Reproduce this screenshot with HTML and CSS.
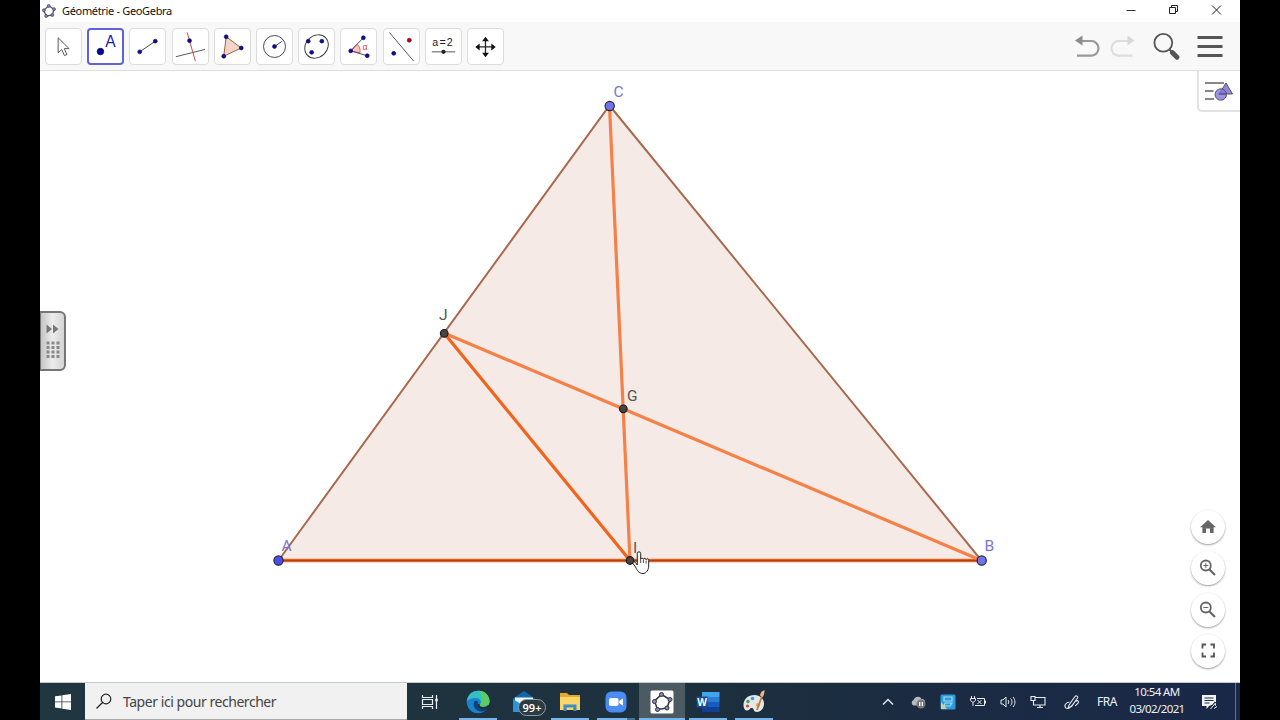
FILE: index.html
```html
<!DOCTYPE html>
<html lang="fr">
<head>
    <meta charset="UTF-8">
    <meta name="viewport" content="width=device-width, initial-scale=1.0">
    <link rel="stylesheet" href="styles.css">
    <title>Géométrie - GeoGebra</title>
</head>
<body>
<div class="screen">

    <!-- Barre de titre -->
    <header class="titlebar">
        <svg class="app-icon" width="14" height="14" viewBox="0 0 14 14">
            <path d="M6.700 1.800 12 5.200 10.300 11 4.200 12.200 1.800 6.300z" fill="none" stroke="#556" stroke-width="1.300"/>
            <g fill="#8684b8" stroke="#446" stroke-width=".7"><circle cx="6.700" cy="1.900" r="1.500"/><circle cx="12" cy="5.200" r="1.500"/><circle cx="10.300" cy="11" r="1.500"/><circle cx="4.200" cy="12" r="1.500"/><circle cx="1.900" cy="6.300" r="1.500"/></g>
        </svg>
        <span class="title">Géométrie - GeoGebra</span>
        <div class="win-buttons">
            <svg width="43" height="22" viewBox="0 0 43 22"><path d="M17.500 10.500h9" stroke="#333"/></svg>
            <svg width="43" height="22" viewBox="0 0 43 22" fill="none" stroke="#222"><path d="M17.500 7.500h6v6h-6zM19.500 7.500v-2h6v6h-2"/></svg>
            <svg width="43" height="22" viewBox="0 0 43 22"><path d="M17 5.500l9 9M26 5.500l-9 9" stroke="#222"/></svg>
        </div>
    </header>

    <!-- Barre d'outils -->
    <nav class="toolbar">
        <button class="tool"><svg viewBox="0 0 36 36"><path d="M12.500 9v15.500l3.700-3.400 2.800 6.300 2.600-1.200-2.800-6h5z" fill="#fff" stroke="#555"/></svg></button>
        <button class="tool selected"><svg viewBox="0 0 36 36"><circle cx="12.500" cy="23.500" r="3.500" fill="#0000b0" stroke="#112"/><text x="17.800" y="18.500" class="tool-a">A</text></svg></button>
        <button class="tool"><svg viewBox="0 0 36 36"><path d="M10 23.500 26 12.500" stroke="#444"/><g class="pt"><circle cx="10" cy="23.500" r="2"/><circle cx="26" cy="12.500" r="2"/></g></svg></button>
        <button class="tool"><svg viewBox="0 0 36 36"><path d="M3 28.500 33 21" stroke="#555"/><path d="M14.500 3.500 23 33" stroke="#d44"/><circle class="pt" cx="17" cy="12" r="2"/></svg></button>
        <button class="tool"><svg viewBox="0 0 36 36"><path d="M11.500 8 27 19.500 9 28z" fill="#f1d5cb" stroke="#a05a3c"/><g class="pt"><circle cx="11.500" cy="8" r="2"/><circle cx="27" cy="19.500" r="2"/><circle cx="9" cy="28" r="2"/></g></svg></button>
        <button class="tool"><svg viewBox="0 0 36 36"><circle cx="18" cy="18" r="11.300" fill="none" stroke="#444"/><path d="M18 18l8-5.500" stroke="#444"/><circle class="pt" cx="18" cy="18" r="2"/></svg></button>
        <button class="tool"><svg viewBox="0 0 36 36"><ellipse cx="18" cy="18" rx="13" ry="11" transform="rotate(-43 18 18)" fill="none" stroke="#444"/><g class="pt"><circle cx="9.500" cy="12.500" r="2"/><circle cx="23.500" cy="12.500" r="2"/><circle cx="13" cy="24" r="2"/></g></svg></button>
        <button class="tool"><svg viewBox="0 0 36 36"><path d="M10 22.500 16.500 15.500c2.600 2 3.600 5.500 3 9z" fill="#fbc4c4" stroke="#d66"/><path d="M23 9 10 22.500 27 27.500" fill="none" stroke="#444"/><text x="22" y="21.500" class="tool-alpha">α</text><g class="pt"><circle cx="23" cy="9" r="2"/><circle cx="10" cy="22.500" r="2"/><circle cx="27" cy="27.500" r="2"/></g></svg></button>
        <button class="tool"><svg viewBox="0 0 36 36"><path d="M5.500 3.500 30.500 33" stroke="#555"/><circle cx="26" cy="11.500" r="2.100" fill="#b00020" stroke="#722" stroke-width=".7"/><circle class="pt" cx="10" cy="25" r="2"/></svg></button>
        <button class="tool"><svg viewBox="0 0 36 36"><text x="6.500" y="17.500" class="tool-eq">a=2</text><path d="M6 23.500h24" stroke="#555"/><circle cx="18" cy="23.500" r="2.200" fill="#222"/></svg></button>
        <button class="tool"><svg viewBox="0 0 36 36"><path d="M18 10v17M10 18.500h17" stroke="#222" stroke-width="1.300"/><path d="M18 8l3.500 4.500h-7zM18 29l3.500-4.500h-7zM7.500 18.500l4.500-3.500v7zM28.500 18.500l-4.500-3.500v7z" fill="#111"/></svg></button>
        <div class="actions">
            <svg width="28" height="24" viewBox="0 0 28 24"><path d="M7 7h10.500a7 7.300 0 0 1 0 14.600H3" fill="none" stroke="#999" stroke-width="2.200"/><path d="M1 6.500 8.500 1.500v10z" fill="#8c8c8c"/></svg>
            <svg width="28" height="24" viewBox="0 0 28 24"><path d="M19 7H9.500a7 7.300 0 0 0 0 14.600h14" fill="none" stroke="#ddd" stroke-width="2.200"/><path d="M25.500 6.500 18.500 1.500v10z" fill="#d8d8d8"/></svg>
            <svg class="search" width="28" height="28" viewBox="0 0 28 28"><circle cx="10.300" cy="10.800" r="8.900" fill="none" stroke="#555" stroke-width="1.800"/><path d="M16.500 17.500l2.500 2.500" stroke="#555" stroke-width="2"/><path d="M19.300 20.500l4.700 4.700" stroke="#555" stroke-width="4.800" stroke-linecap="round"/></svg>
            <svg class="menu" width="26" height="22" viewBox="0 0 26 22"><path d="M.5 2.500h25M.5 11.500h25M.5 20.500h25" stroke="#555" stroke-width="2.800"/></svg>
        </div>
    </nav>

    <!-- Zone graphique -->
    <main class="canvas">
        <svg class="figure" width="1200" height="611" viewBox="40 71 1200 611">
            <path d="M278.500 560.500 609.500 105.500 981.500 560.500z" fill="#f5eae6" stroke="#a86a4e" stroke-width="2"/>
            <path d="M278.500 560.500H981.500" stroke="#f26a24" stroke-width="3.400"/>
            <path d="M278.500 560.500H981.500" stroke="#a8441c" stroke-width="1.700"/>
            <g class="median">
                <path d="M609.500 105.500 630 560.500M444 333 981.500 560.500"/>
                <path class="middle" d="M444 333 630 560.500"/>
            </g>
            <g class="free-point">
                <circle class="dark" cx="278.500" cy="560.500" r="4.600"/><circle cx="609.700" cy="106" r="4.600"/><circle cx="981.700" cy="560.500" r="4.600"/>
            </g>
            <g class="fixed-point">
                <circle cx="444.200" cy="333.300" r="3.800"/><circle cx="623.300" cy="408.800" r="3.800"/><circle cx="630" cy="560.500" r="3.800"/>
            </g>
            <g class="label">
                <text x="281.500" y="551" class="blue">A</text>
                <text x="984.500" y="551" class="blue">B</text>
                <text x="613.500" y="96.500" class="blue">C</text>
                <text x="439" y="319.500">J</text>
                <text x="627" y="401">G</text>
                <text x="633" y="552.500">I</text>
            </g>
            <path d="M637.300 565v-11.500a1.700 1.700 0 0 1 3.400 0v5.500a1.500 1.500 0 0 1 2.700 0 1.500 1.500 0 0 1 2.700.6 1.400 1.400 0 0 1 2.600 1v5.400c0 3.500-2.200 7.500-5.700 7.500-4.500 0-5.500-3-7.500-6.500l-2.200-3.200c-1-1.500 1-2.700 2.200-1.300z" fill="#fff" stroke="#222" stroke-width="1"/>
            <path d="M640.700 559v4M643.400 559.500v3.500M646.100 560.500v3" stroke="#222" stroke-width=".8"/>
        </svg>

        <div class="side-handle">
            <svg width="26" height="60" viewBox="0 0 26 60">
                <path d="M6.500 13.500l5.500 4.500-5.500 4.500zM13 13.500l5.500 4.500-5.500 4.500z" fill="#777"/>
                <path d="M6.500 32h13M6.500 36.500h13M6.500 41h13M6.500 45.500h13" stroke="#888" stroke-width="3" stroke-dasharray="3 2"/>
            </svg>
        </div>

        <div class="style-button">
            <svg width="30" height="24" viewBox="0 0 30 24"><path d="M0 4h19M0 12h8.500M0 20h9" stroke="#888" stroke-width="2"/><path d="M21 4 27.500 15H14z" fill="#9289dc" stroke="#555"/><circle cx="15.800" cy="15.500" r="5.700" fill="#8078e0" fill-opacity=".8" stroke="#555"/><path d="M14 15h7" stroke="#444"/></svg>
        </div>

        <div class="view-buttons">
            <button class="round"><svg viewBox="0 0 34 34"><path d="M17 10l-8 7.200h2.400V23H15v-4.500h4V23h3.600v-5.800H25z" fill="#666"/></svg></button>
            <button class="round"><svg viewBox="0 0 34 34" fill="none" stroke="#666"><circle cx="14.800" cy="14.500" r="5" stroke-width="1.800"/><path d="M18.500 18.500l5.500 5.500" stroke-width="2.200"/><path d="M12.300 14.500h5M14.800 12v5"/></svg></button>
            <button class="round"><svg viewBox="0 0 34 34" fill="none" stroke="#666"><circle cx="14.800" cy="14.500" r="5" stroke-width="1.800"/><path d="M18.500 18.500l5.500 5.500" stroke-width="2.200"/><path d="M12.300 14.500h5"/></svg></button>
            <button class="round"><svg viewBox="0 0 34 34" fill="none" stroke="#555" stroke-width="1.800"><path d="M11.500 14.500v-4H15M19.500 10.500h3.500v4M23 18.500v4h-3.500M15 22.500h-3.500v-4"/></svg></button>
        </div>
    </main>

    <!-- Barre des tâches -->
    <footer class="taskbar">
        <div class="start"><svg width="16" height="16" viewBox="0 0 16 16" fill="#fff"><path d="M0 2.300l6.500-.9v6.100H0zM7.300 1.300 16 0v7.500H7.300zM0 8.300h6.500v6.100L0 13.500zM7.300 8.300H16V16l-8.700-1.300z"/></svg></div>
        <div class="search-box">
            <svg width="16" height="16" viewBox="0 0 16 16" fill="none" stroke="#222" stroke-width="1.200"><circle cx="10" cy="6" r="4.800"/><path d="M6.500 9.500.5 15.500"/></svg>
            <span>Taper ici pour rechercher</span>
        </div>
        <div class="task view"><svg width="18" height="16" viewBox="0 0 18 16" fill="none" stroke="#e8eef0" stroke-width="1.200"><path d="M1.500 1v2.500h10V1M1.500 15v-2.500h10V15M1.500 5.500h10v5h-10zM15.500 1v14"/><path d="M14.200 6h2.600" stroke-width="2.500"/></svg></div>
        <div class="task open">
            <svg width="24" height="24" viewBox="0 0 24 24">
                <circle cx="12" cy="12" r="11.300" fill="#1585cf"/>
                <path d="M.8 11C2 3.500 7.500.7 12.500.7c6.500 0 11 5 11 10.300 0 4-3 6-6 6-2.800 0-4.500-1-3.500-2.500 2-3 0-6.500-4.500-6.500C5.500 8 2 9.500.8 11z" fill="#35bfc4"/>
                <path d="M12 .7c7 0 11.500 5 11.500 10.300 0 4-3 6-6 6-2.800 0-4.500-1-3.500-2.500C17 10 17 4 12 .7z" fill="#5bcc62"/>
                <path d="M8.300 11.500C6 16 10 22 16 21.500c2.500-.2 4.500-1.500 5.500-3-2 1-7 1.500-9.500-2-1-1.400-.8-3 .2-4.500-1-1.500-3-1.800-3.900-.5z" fill="#123f7c"/>
                <path d="M14 14.500c-1 1.500.7 2.500 3.500 2.500 1.800 0 3.500-.7 4.600-2l1.400 1c-.5 1-1 2-1.800 2.700-3 1.300-7.500 1-9.700-2.200-.7-1-.8-2-.5-3z" fill="#1d303e"/>
            </svg>
        </div>
        <div class="task mail">
            <svg width="24" height="24" viewBox="0 0 24 24"><path d="M1 8.500 12 1l11 7.500V22H1z" fill="#1268b0"/><path d="M3 7.500h18V16H3z" fill="#f2f6fa"/><path d="M1 9l11 7 11-7v13H1z" fill="#2696e2"/></svg>
            <span class="badge">99+</span>
        </div>
        <div class="task open">
            <svg width="22" height="20" viewBox="0 0 22 20"><path d="M1 1h7l2 2h11v15H1z" fill="#e5a92e"/><path d="M1 5h20v13H1z" fill="#fbd568"/><path d="M4.500 19v-6.500h13V19h-3.200v-3.500H7.700V19z" fill="#3b8fc4"/></svg>
        </div>
        <div class="task open stacked">
            <svg width="22" height="22" viewBox="0 0 22 22"><rect x=".5" y=".5" width="21" height="21" rx="6" fill="#4a8cf4"/><rect x="4" y="7" width="9.500" height="8" rx="1.800" fill="#fff"/><path d="M14.200 10 18 7.300v7.400L14.200 12z" fill="#fff"/></svg>
        </div>
        <div class="task open active">
            <svg width="24" height="24" viewBox="0 0 24 24"><rect x=".5" y=".5" width="23" height="23" rx="1.500" fill="#fff"/><path d="M11.500 4.500 20 9.500 17 18 7.500 19.500 4.500 11z" fill="none" stroke="#333" stroke-width="1.500"/><g fill="#8b86c8" stroke="#333"><circle cx="11.500" cy="4.500" r="2"/><circle cx="20" cy="9.500" r="2"/><circle cx="17" cy="18" r="2"/><circle cx="7.500" cy="19.500" r="2"/><circle cx="4.500" cy="11.500" r="2"/></g></svg>
        </div>
        <div class="task open">
            <svg width="24" height="20" viewBox="0 0 24 20"><path d="M6 0h17.500v5H6z" fill="#41a5ee"/><path d="M6 5h17.500v5H6z" fill="#2b7cd3"/><path d="M6 10h17.500v5H6z" fill="#185abd"/><path d="M6 15h17.500v5H6z" fill="#123f92"/><path d="M.5 4.500h11v11H.5z" fill="#164a9c"/><text x="1.300" y="13.600" class="word">W</text></svg>
        </div>
        <div class="task open">
            <svg width="24" height="24" viewBox="0 0 24 24"><path d="M12.500 5C6 5 1.500 9 1.500 15c0 3.500 2 6 4 5.500 2.500-.6 2.500-3 4.500-2.500 2.500.6 1 4 5 4s7-4 7-8.500S18 5 12.500 5z" fill="#e2e7ea"/><circle cx="6" cy="11.500" r="1.700" fill="#4e9a52"/><circle cx="10.500" cy="8.500" r="1.700" fill="#4696c8"/><circle cx="5.500" cy="16" r="1.600" fill="#d64b35"/><circle cx="16" cy="15" r="2" fill="#e8a038"/><path d="M15 20 20 6" stroke="#c87e3a" stroke-width="1.800"/><path d="M18 5.500c.3-2 1.500-4.500 4.500-5.500 0 3-.5 5.500-2 7z" fill="#efb680"/></svg>
        </div>

        <div class="tray">
            <div class="tray-item"><svg width="12" height="8" viewBox="0 0 12 8"><path d="M1 6.500l5-5 5 5" fill="none" stroke="#e6ebf0" stroke-width="1.300"/></svg></div>
            <div class="tray-item"><svg width="16" height="14" viewBox="0 0 16 14"><path d="M3.500 10.500a3 3 0 0 1 0-5.500C5 1 10 .5 11.500 4c3 0 4 2 3.500 4l-3 2.500z" fill="#b5babe"/><circle cx="11" cy="9" r="4.500" fill="#777"/><path d="M9.700 7v4M12.300 7v4" stroke="#fff" stroke-width="1.200"/></svg></div>
            <div class="tray-item"><svg width="16" height="16" viewBox="0 0 16 16"><rect x=".5" y=".5" width="15" height="15" rx="1.500" fill="#2c9cdd"/><path d="M4 3h8v4H4zM5 9h7l-2 3H4z" fill="none" stroke="#a6dcf8" stroke-width="1.200"/><path d="M1 8v7h6z" fill="#d6cd9c"/></svg></div>
            <div class="tray-item"><svg width="16" height="12" viewBox="0 0 16 12" fill="none" stroke="#e6ebf0"><path d="M1.500 0v2M4.500 0v2M.5 2.500h5v2l-2.500 2-2.500-2zM3 6.500V10M7 2.500h7.500v7H5M15.500 4.500v3M7.500 4l4 4M11.500 4l-4 4"/></svg></div>
            <div class="tray-item"><svg width="16" height="14" viewBox="0 0 16 14" fill="none" stroke="#e6ebf0"><path d="M1 5h2l3-3v10L3 9H1zM8 5c1 1 1 3 0 4M10.500 3.500c2 2 2 5 0 7M13 2c2.600 3 2.600 7 0 10"/></svg></div>
            <div class="tray-item"><svg width="16" height="14" viewBox="0 0 16 14" fill="none" stroke="#e6ebf0" stroke-width="1.100"><path d="M5 2.500h10v7.500H3.500V6M7 12.500h6M10 10v2.500M1 1.500h4v4H1z"/></svg></div>
            <div class="tray-item pen"><svg width="17" height="16" viewBox="0 0 17 16" fill="none" stroke="#e6ebf0" stroke-width="1.100"><path d="M5 11 11 2.500c1-1.500 3.500 0 2.500 1.500L7.500 12.500l-3 1zM5.500 8C2 8-.5 12 2 14c3 1.500 5-1 7.500-4.500s5-3.500 5-1.500-2.500 2-3 4"/></svg></div>
            <div class="lang">FRA</div>
            <div class="clock"><span>10:54 AM</span><span>03/02/2021</span></div>
            <div class="notif"><svg width="17" height="16" viewBox="0 0 17 16"><path d="M1 1h14v11H8l-2.500 3v-3H1z" fill="#f2f4f6"/><path d="M3.500 4h9M3.500 6.500h9M3.500 9h5" stroke="#1b2c42"/><path d="M9 15l5.500-7M8.500 13c3-2.500 6-1 6.500 1" stroke="#1b2c42" stroke-width="2"/><path d="M9.500 15l5-6M13 14.500l3-2" stroke="#eee"/></svg></div>
            <div class="show-desktop"></div>
        </div>
    </footer>
</div>
</body>
</html>
```
FILE: styles.css
```css
* {
    box-sizing: border-box;
}

body {
    margin: 0;
    background: #000;
    font-family: "Noto Sans", "Open Sans", sans-serif;
    overflow: hidden;
}

svg {
    display: block;
    flex: none;
}

button {
    padding: 0;
    border: 0;
    background: #fff;
}

.screen {
    display: flex;
    flex-direction: column;
    width: 1200px;
    height: 720px;
    margin: 0 auto;
    background: #fff;
}

/* Barre de titre */
.titlebar {
    display: flex;
    align-items: center;
    height: 22px;
    padding-left: 2px;
    background: #fff;
}

.title {
    margin-left: 6px;
    padding-bottom: 2px;
    font-size: 11px;
    letter-spacing: -0.330px;
    color: #111;
    white-space: nowrap;
}

.win-buttons {
    display: flex;
    margin-left: auto;
    padding-right: 2px;
}

/* Barre d'outils */
.toolbar {
    display: flex;
    align-items: center;
    gap: 5.200px;
    height: 49px;
    padding: 0 17px 0 5px;
    background: #f8f8f8;
    border-bottom: 1px solid #dedede;
}

.tool {
    width: 37px;
    height: 37px;
    border: 1px solid #dcdcdc;
    border-radius: 4px;
}

.tool svg {
    width: 35px;
    height: 35px;
}

.tool.selected {
    border: 2px solid #6161d8;
}

.tool.selected svg {
    width: 33px;
    height: 33px;
}

.pt {
    fill: #0a0aa8;
    stroke: #114;
    stroke-width: 0.700;
}

.tool-a {
    font-size: 17px;
    fill: #2020b8;
}

.tool-alpha {
    font-size: 9px;
    fill: #d44;
}

.tool-eq {
    font-size: 11px;
    letter-spacing: 1.200px;
    fill: #222;
}

.actions {
    display: flex;
    align-items: center;
    gap: 7px;
    margin-left: auto;
}

.actions .search {
    margin-left: 9px;
}

.actions .menu {
    margin-left: 9px;
}

/* Zone graphique */
.canvas {
    position: relative;
    height: 611px;
    background: #fff;
}

.median path {
    fill: none;
    stroke: #f58048;
    stroke-width: 3.200;
}

.median .middle {
    stroke: #f2631c;
}

.free-point circle {
    fill: #7272ec;
    stroke: #26263c;
    stroke-width: 1.200;
}

.free-point .dark {
    fill: #4d4de8;
}

.fixed-point circle {
    fill: #454545;
    stroke: #1c1c1c;
    stroke-width: 1.200;
}

.label text {
    font-family: Roboto, "Liberation Sans", sans-serif;
    font-size: 15.500px;
    fill: #555;
}

.label .blue {
    fill: #7a74d8;
}

.side-handle {
    position: absolute;
    left: 0;
    top: 240px;
    width: 26px;
    height: 60px;
    background: linear-gradient(90deg, #c4c4c4, #ececec 50%, #d4d4d4);
    border: 2px solid #777;
    border-left-width: 1px;
    border-radius: 0 6px 6px 0;
}

.side-handle svg {
    margin: -2px 0 0 -1px;
}

.style-button {
    position: absolute;
    right: 0;
    top: 0;
    width: 43px;
    height: 41px;
    padding: 8px 0 0 6px;
    background: #fff;
    border: 1px solid #e2e2e2;
    border-width: 0 0 2px 2px;
    border-radius: 0 0 0 5px;
}

.view-buttons {
    position: absolute;
    right: 15px;
    top: 439px;
    display: flex;
    flex-direction: column;
    gap: 7.300px;
}

.round {
    width: 34px;
    height: 34px;
    border-radius: 50%;
    box-shadow: 0 1px 2px rgba(0, 0, 0, 0.4);
}

/* Barre des tâches */
.taskbar {
    display: flex;
    height: 38px;
    background: linear-gradient(90deg, #203640, #1d303e 55%, #1b2b42 75%, #1a2848);
    border-top: 1px solid #c4cacc;
}

.start {
    display: flex;
    align-items: center;
    justify-content: center;
    width: 45px;
}

.search-box {
    display: flex;
    align-items: center;
    gap: 11px;
    width: 322px;
    padding-left: 11px;
    background: #f1f1f1;
    border-bottom: 1px solid #aaa;
    font-size: 14px;
    letter-spacing: -0.450px;
    color: #444;
}

.task {
    position: relative;
    display: flex;
    align-items: center;
    justify-content: center;
    width: 46px;
}

.task.view {
    margin-right: 2px;
}

.task.open::after {
    content: "";
    position: absolute;
    left: 4px;
    right: 4px;
    bottom: 0;
    height: 2px;
    background: #76b5ea;
}

.task.active {
    background: #4b5a63;
}

.task.active::after {
    left: 0;
    right: 0;
}

.task.stacked::after {
    background: linear-gradient(90deg, #76b5ea 30px, #49708f 30px);
}

.badge {
    position: absolute;
    left: 17px;
    top: 16px;
    width: 28px;
    height: 17px;
    border: 1px solid #929ba1;
    border-radius: 9px;
    background: #2c3a42;
    color: #fff;
    font-size: 11px;
    font-weight: 600;
    line-height: 15px;
    text-align: center;
}

.word {
    font-size: 10px;
    font-weight: bold;
    fill: #fff;
}

.tray {
    display: flex;
    align-items: center;
    margin-left: auto;
    color: #eef1f5;
    font-size: 12px;
}

.tray-item {
    display: flex;
    justify-content: center;
    width: 30px;
}

.tray-item.pen {
    width: 38px;
}

.lang {
    width: 32px;
    text-align: center;
    letter-spacing: -0.500px;
}

.clock {
    display: flex;
    flex-direction: column;
    align-items: center;
    width: 68px;
    padding-bottom: 3px;
    font-size: 11.500px;
    letter-spacing: -0.600px;
    line-height: 17px;
}

.notif {
    display: flex;
    justify-content: center;
    width: 36px;
    margin-right: 8px;
}

.show-desktop {
    width: 5px;
    height: 37px;
    border-left: 1px solid #66748a;
}
```
